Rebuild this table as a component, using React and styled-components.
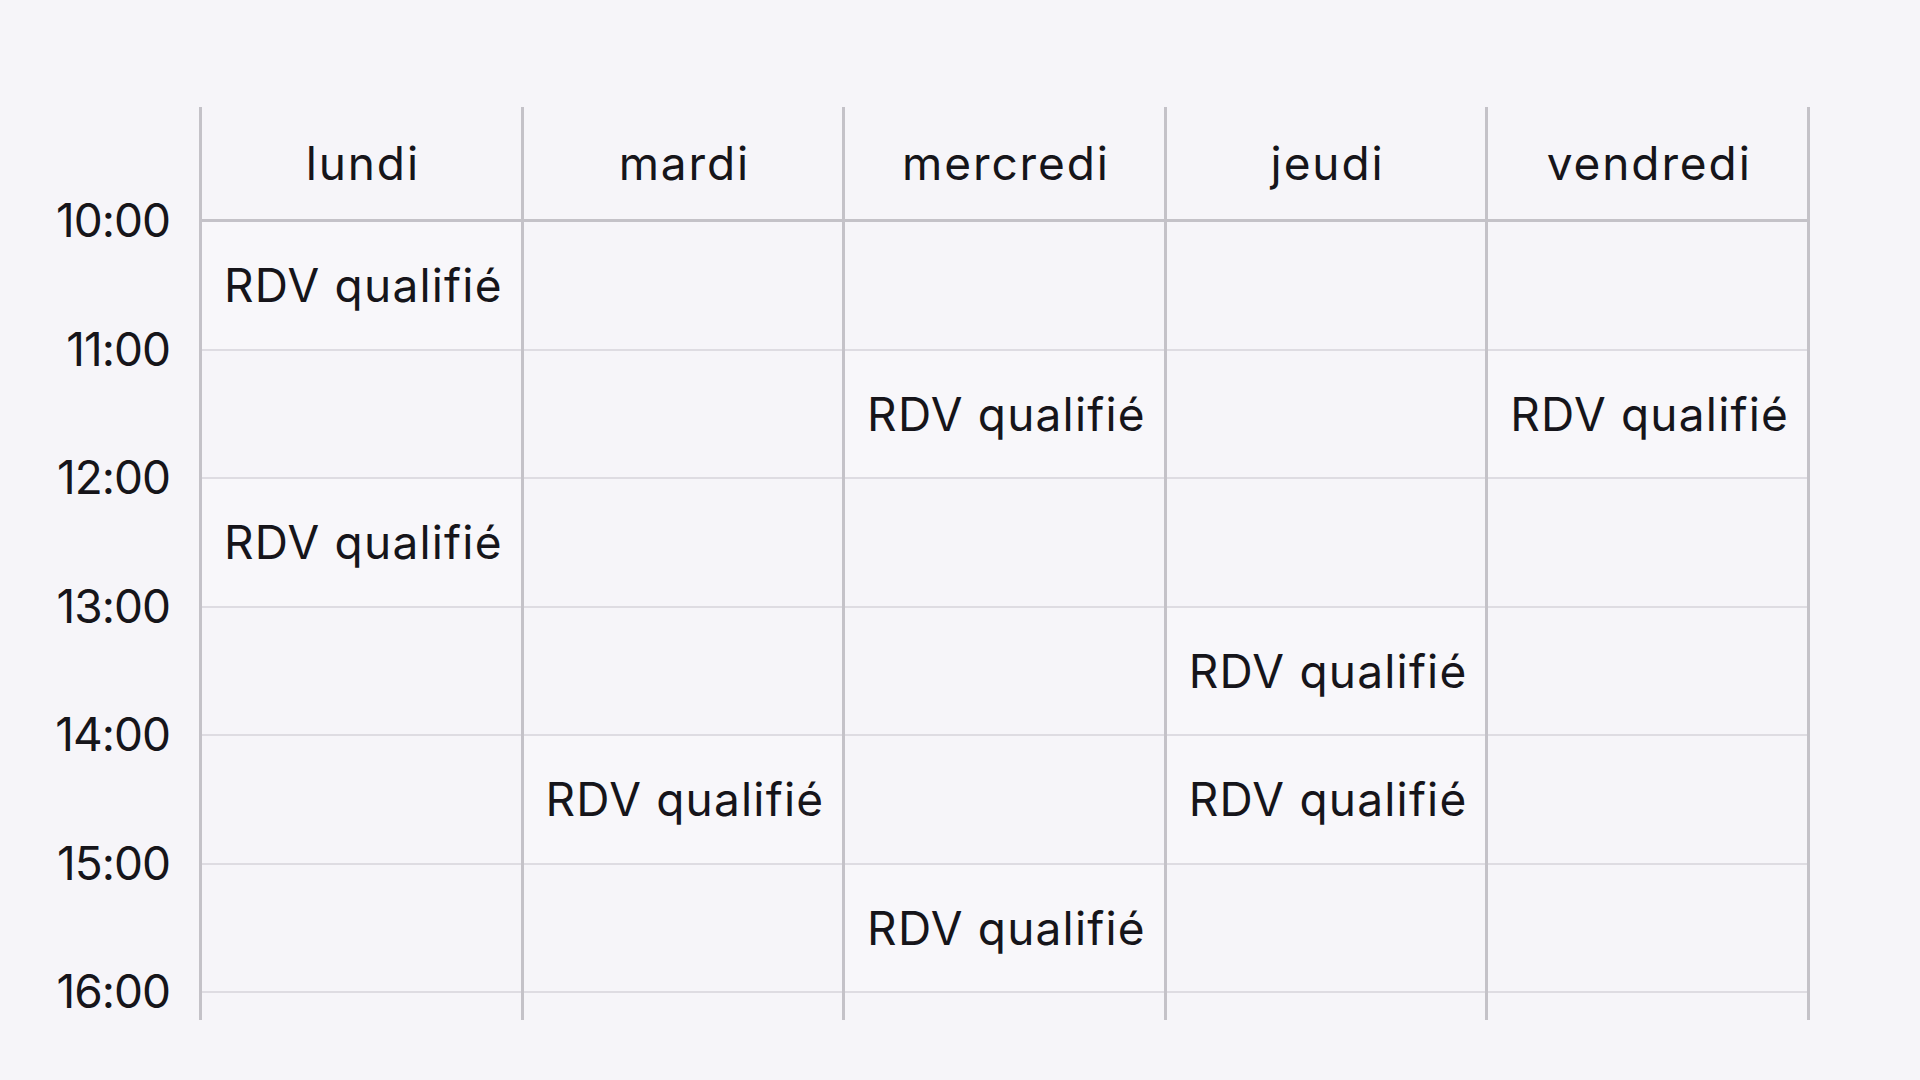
import React from 'react';
import styled, { createGlobalStyle } from 'styled-components';

const GlobalStyle = createGlobalStyle`
    body {
        margin: 0;
        background: #f6f5f9;
        font-family: Inter, "Noto Sans", sans-serif;
        color: #16151a;
    }
`;

const SLOT = 128.5;

const Page = styled.div`
    display: flex;
    padding-top: 107px;
    min-height: 100vh;
    box-sizing: border-box;
`;

const TimeColumn = styled.div`
    width: 199px;
    padding: 49px 29px 0 0;
    box-sizing: border-box;
    display: flex;
    flex-direction: column;
    align-items: flex-end;
`;

const TimeLabel = styled.div`
    height: ${SLOT}px;
    line-height: ${SLOT}px;
    font-size: 46px;
    letter-spacing: -1px;
`;

const DayGrid = styled.div`
    display: flex;
    border-right: 3px solid #c4c2c8;
    align-self: flex-start;
`;

const DayColumn = styled.div`
    width: 321.6px;
    box-sizing: border-box;
    border-left: 3px solid #c4c2c8;
    display: flex;
    flex-direction: column;
`;

// letter-spacing leaves a trailing gap, the left padding evens it out
const DayHeader = styled.div`
    height: 115px;
    box-sizing: border-box;
    border-bottom: 3px solid #c4c2c8;
    display: flex;
    align-items: center;
    justify-content: center;
    padding-left: 3px;
    font-size: 46px;
    line-height: 112px;
    letter-spacing: 1.9px;
`;

const Slot = styled.div`
    height: ${SLOT}px;
    box-sizing: border-box;
    border-bottom: 2px solid #dedce2;
    display: flex;
    align-items: center;
    justify-content: center;
    padding-left: 4px;
    background: ${props => props.booked ? '#f8f7fa' : 'transparent'};
    font-size: 46px;
    letter-spacing: 1.2px;
    white-space: nowrap;
`;

const Tail = styled.div`
    height: 27px;
`;

const hours = ['10:00', '11:00', '12:00', '13:00', '14:00', '15:00', '16:00'];

// index of the hour slot (0 = 10h-11h) that holds a booking
const days = [
    { name: 'lundi', booked: [0, 2] },
    { name: 'mardi', booked: [4] },
    { name: 'mercredi', booked: [1, 5] },
    { name: 'jeudi', booked: [3, 4] },
    { name: 'vendredi', booked: [1] },
];

const App = () => {
    return (
        <>
            <GlobalStyle />
            <Page>
                <TimeColumn>
                    {hours.map(h => <TimeLabel key={h}>{h}</TimeLabel>)}
                </TimeColumn>
                <DayGrid>
                    {days.map(day => (
                        <DayColumn key={day.name}>
                            <DayHeader>{day.name}</DayHeader>
                            {hours.slice(0, 6).map((h, i) => {
                                const booked = day.booked.includes(i);
                                return (
                                    <Slot key={h} booked={booked}>
                                        {booked ? 'RDV qualifié' : null}
                                    </Slot>
                                );
                            })}
                            <Tail />
                        </DayColumn>
                    ))}
                </DayGrid>
            </Page>
        </>
    );
};

export default App;
